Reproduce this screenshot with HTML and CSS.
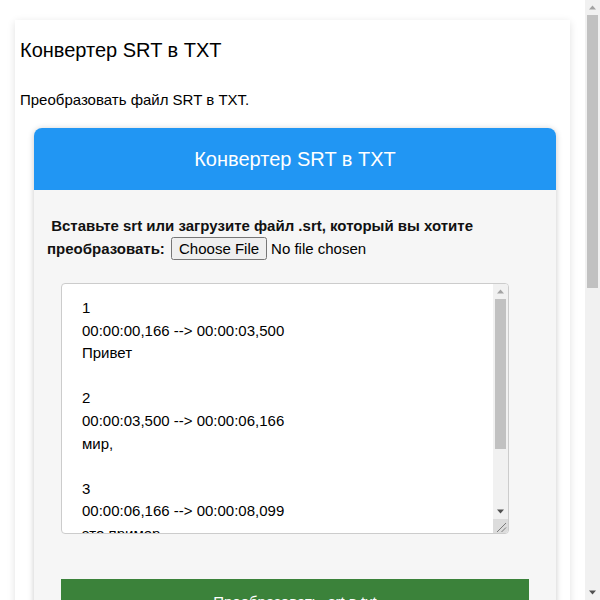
FILE: index.html
```html
<!DOCTYPE html>
<html lang="ru">
<head>
<meta charset="utf-8">
<title>Конвертер SRT в TXT</title>
<link rel="stylesheet" href="styles.css">
</head>
<body>
<div class="viewport">
  <div class="page">
    <h1 class="title">Конвертер SRT в TXT</h1>
    <p class="lead">Преобразовать файл SRT в TXT.</p>
    <div class="tool">
      <div class="tool-head">Конвертер SRT в TXT</div>
      <div class="tool-body">
        <label class="upload">&nbsp;Вставьте srt или загрузите файл .srt, который вы хотите преобразовать: <input type="file" class="file" accept=".srt"></label>
        <div class="srt-box">
          <textarea class="srt">1
00:00:00,166 --> 00:00:03,500
Привет

2
00:00:03,500 --> 00:00:06,166
мир,

3
00:00:06,166 --> 00:00:08,099
это пример

4
00:00:08,099 --> 00:00:10,500
файла субтитров</textarea>
          <div class="sb sb-small">
            <div class="sb-btn"><svg width="15" height="15" viewBox="0 0 15 15"><polygon points="4,9.5 11,9.5 7.5,5.5" fill="#a3a3a3"/></svg></div>
            <div class="sb-track"><div class="sb-thumb thumb-small"></div></div>
            <div class="sb-btn"><svg width="15" height="15" viewBox="0 0 15 15"><polygon points="4,5.5 11,5.5 7.5,9.5" fill="#505050"/></svg></div>
            <div class="sb-corner"><svg width="15" height="14" viewBox="0 0 15 14"><path d="M4 13 L13 4 M8.5 13 L13 8.5" stroke="#7a7a7a" stroke-width="1" fill="none"/></svg></div>
          </div>
        </div>
        <button class="convert" type="button">Преобразовать .srt в txt</button>
        <div class="result"></div>
      </div>
    </div>
  </div>
</div>
<div class="sb sb-page">
  <div class="sb-btn"><svg width="15" height="15" viewBox="0 0 15 15"><polygon points="4,9.5 11,9.5 7.5,5.5" fill="#a3a3a3"/></svg></div>
  <div class="sb-track"><div class="sb-thumb thumb-page"></div></div>
  <div class="sb-btn"><svg width="15" height="15" viewBox="0 0 15 15"><polygon points="4,5.5 11,5.5 7.5,9.5" fill="#505050"/></svg></div>
</div>
</body>
</html>
```
FILE: styles.css
```css
html, body {
  margin: 0;
  padding: 0;
  background: #ffffff;
  font-family: "Liberation Sans", Arial, sans-serif;
  color: #000;
}

body {
  display: flex;
  height: 100vh;
  overflow: hidden;
}

.viewport {
  flex: 1;
  min-width: 0;
  overflow: hidden;
}

/* scrollbars */
.sb {
  display: flex;
  flex-direction: column;
  width: 15px;
  flex: 0 0 15px;
  background: #f1f1f1;
}

.sb-btn {
  height: 15px;
  flex: 0 0 15px;
}

.sb-btn svg,
.sb-corner svg {
  display: block;
}

.sb-track {
  flex: 1;
  padding: 0 2px;
}

.sb-thumb {
  background: #c1c1c1;
}

.thumb-page {
  height: 273px;
}

.thumb-small {
  height: 150px;
}

.sb-corner {
  height: 14px;
  flex: 0 0 14px;
  background: #dcdcdc;
}

/* page */
.page {
  margin: 20px 15px 20px 15px;
  padding: 1px 14px 30px 5px;
  background: #ffffff;
  box-shadow: 0 2px 8px rgba(0, 0, 0, 0.12);
}

.title {
  margin: 18px 0 0;
  font-size: 20px;
  font-weight: normal;
  line-height: 23px;
}

.lead {
  margin: 29px 0 0;
  font-size: 15px;
  line-height: 18px;
}

.tool {
  margin: 19px 0 0 14px;
  border-radius: 8px;
  background: #f6f6f6;
  box-shadow: 0 1px 6px rgba(0, 0, 0, 0.22);
  overflow: hidden;
}

.tool-head {
  height: 62px;
  background: #2196f3;
  color: #ffffff;
  font-size: 20px;
  line-height: 62px;
  text-align: center;
}

.tool-body {
  padding: 24px 27px 40px 13px;
}

.upload {
  display: block;
  font-size: 15px;
  font-weight: bold;
  line-height: 23px;
  color: #111;
}

.file {
  font: inherit;
  font-weight: normal;
  font-size: 15px;
  color: #000;
  margin-left: 2px;
}

.srt-box {
  display: flex;
  box-sizing: border-box;
  width: 448px;
  height: 251px;
  margin: 23px 0 0 14px;
  border: 1px solid #cccccc;
  border-radius: 4px;
  background: #ffffff;
  overflow: hidden;
}

.srt {
  flex: 1;
  min-width: 0;
  margin: 0;
  padding: 13px 20px 0;
  border: 0;
  outline: none;
  background: transparent;
  font-family: "Liberation Sans", Arial, sans-serif;
  font-size: 15px;
  line-height: 22.6px;
  color: #000;
  resize: none;
  overflow: hidden;
}

.convert {
  display: block;
  box-sizing: border-box;
  width: 468px;
  height: 44px;
  margin: 45px 0 0 14px;
  border: 0;
  background: #3b823a;
  color: #ffffff;
  font-family: "Liberation Sans", Arial, sans-serif;
  font-size: 15px;
}

.result {
  height: 200px;
}
```
